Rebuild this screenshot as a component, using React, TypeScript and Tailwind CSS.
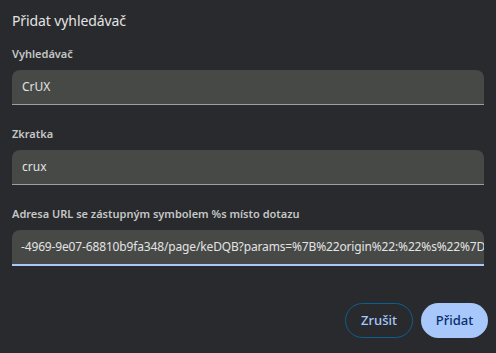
export default function App() {
  return (
    <div className="w-[496px] h-[353px] bg-[#292a2d] text-[#e3e3e3] font-['Noto_Sans',sans-serif] px-3 pt-[11px]">
      <h1 className="text-[14px] leading-[20px] text-[#e3e3e3] tracking-[-0.1px]">Přidat vyhledávač</h1>

      <div className="mt-[15px] text-[11px] font-semibold leading-[16px] text-[#c4c7c5]">Vyhledávač</div>
      <div className="mt-[8px] h-[35px] rounded-t-[8px] bg-[#474947] border-b border-[#9aa0a6] flex items-center px-[10px] text-[12px]">
        CrUX
      </div>

      <div className="mt-[21px] text-[11px] font-semibold leading-[16px] text-[#c4c7c5]">Zkratka</div>
      <div className="mt-[8px] h-[35px] rounded-t-[8px] bg-[#474947] border-b border-[#9aa0a6] flex items-center px-[10px] text-[12px]">
        crux
      </div>

      <div className="mt-[21px] text-[11px] font-semibold leading-[16px] text-[#c4c7c5]">
        Adresa URL se zástupným symbolem %s místo dotazu
      </div>
      <div className="mt-[8px] h-[36px] rounded-t-[8px] bg-[#474947] border-b-2 border-[#a8c7fa] flex items-center pl-[9px] text-[12px] tracking-[-0.15px] overflow-hidden whitespace-nowrap">
        <span>-4969-9e07-68810b9fa348/page/keDQB?params=%7B%22origin%22:%22%s%22%7D</span>
        <span className="w-px h-[15px] bg-[#e3e3e3]" />
      </div>

      <div className="mt-[37px] flex justify-end gap-[8px] mr-[-4px]">
        <button className="h-[35px] w-[68px] rounded-full border border-[#0d5f8f] text-[#a8c7fa] text-[13px] font-medium">
          Zrušit
        </button>
        <button className="h-[35px] w-[67px] rounded-full bg-[#a8c7fa] text-[#062e6f] text-[13px] font-medium">
          Přidat
        </button>
      </div>
    </div>
  );
}
